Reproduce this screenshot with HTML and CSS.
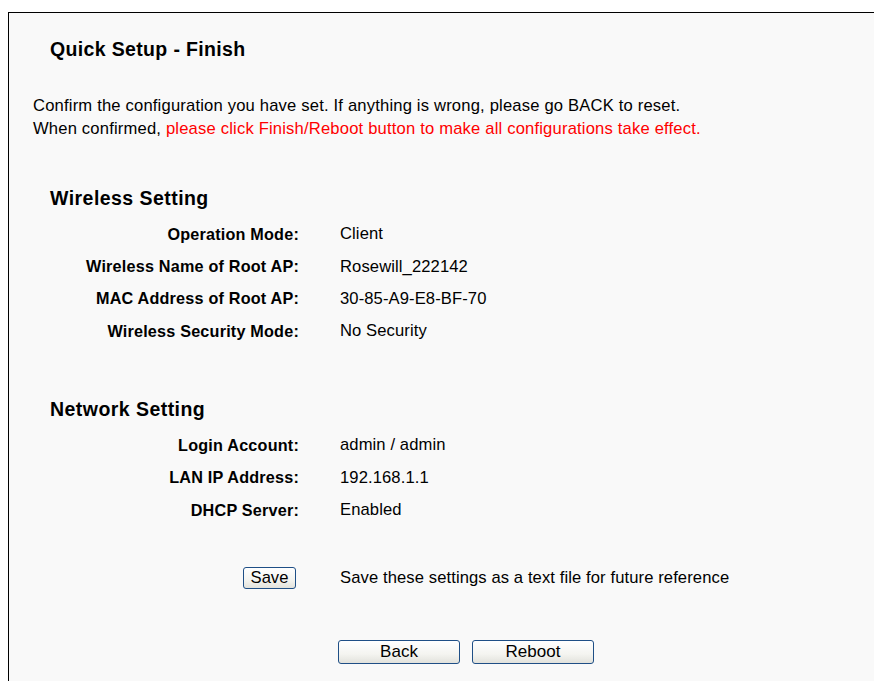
FILE: index.html
```html
<!DOCTYPE html>
<html>
<head>
<meta charset="utf-8">
<title>Quick Setup - Finish</title>
<link rel="stylesheet" href="styles.css">
</head>
<body>
<div class="panel">
  <h1 class="title">Quick Setup - Finish</h1>
  <p class="intro">Confirm the configuration you have set. If anything is wrong, please go BACK to reset.<br>When confirmed, <span class="warn">please click Finish/Reboot button to make all configurations take effect.</span></p>

  <h2 class="section">Wireless Setting</h2>
  <div class="grid">
    <div class="label">Operation Mode:</div><div class="value">Client</div>
    <div class="label">Wireless Name of Root AP:</div><div class="value">Rosewill_222142</div>
    <div class="label">MAC Address of Root AP:</div><div class="value">30-85-A9-E8-BF-70</div>
    <div class="label">Wireless Security Mode:</div><div class="value">No Security</div>
  </div>

  <h2 class="section section-net">Network Setting</h2>
  <div class="grid">
    <div class="label">Login Account:</div><div class="value">admin / admin</div>
    <div class="label">LAN IP Address:</div><div class="value">192.168.1.1</div>
    <div class="label">DHCP Server:</div><div class="value">Enabled</div>
  </div>

  <div class="grid save-row">
    <div class="label"><button class="btn btn-save" type="button">Save</button></div>
    <div class="value">Save these settings as a text file for future reference</div>
  </div>

  <div class="actions">
    <button class="btn btn-wide" type="button">Back</button>
    <button class="btn btn-wide" type="button">Reboot</button>
  </div>
</div>
</body>
</html>
```

FILE: styles.css
```css
html, body {
  margin: 0;
  padding: 0;
  background: #ffffff;
}

body {
  padding: 12px 0 0 8px;
  font-family: "Liberation Sans", Arial, sans-serif;
  color: #000;
  overflow: hidden;
}

.panel {
  border-top: 1px solid #000;
  border-left: 1px solid #000;
  background: #f9f9f9;
  min-height: 700px;
  box-sizing: border-box;
}

.title {
  margin: 0;
  padding: 24px 0 0 41px;
  font-size: 19.5px;
  letter-spacing: 0.35px;
  font-weight: bold;
  line-height: 24px;
}

.intro {
  margin: 33px 0 0 24px;
  font-size: 16.6px;
  letter-spacing: 0.18px;
  line-height: 23px;
}

.warn {
  color: #ff0000;
}

.section {
  margin: 45.5px 0 0 41px;
  font-size: 19.5px;
  letter-spacing: 0.45px;
  font-weight: bold;
  line-height: 24px;
}

.section-net {
  margin-top: 49px;
}

.grid {
  display: grid;
  grid-template-columns: 290px 1fr;
  column-gap: 41px;
  grid-auto-rows: 32.4px;
  margin-top: 8.5px;
  align-items: center;
  font-size: 16.6px;
  letter-spacing: 0.1px;
}

.label {
  text-align: right;
  font-weight: bold;
  font-size: 16.2px;
  letter-spacing: 0.2px;
}

.save-row {
  margin-top: 36px;
}

.btn {
  font-family: "Liberation Sans", Arial, sans-serif;
  font-size: 17px;
  letter-spacing: 0;
  color: #000;
  border: 1px solid #1f4f86;
  border-radius: 3px;
  background: linear-gradient(#ffffff, #f4f4f0 60%, #e2e2dc);
  padding: 0;
  cursor: pointer;
}

.btn-save {
  width: 53px;
  height: 22px;
  margin-right: 3px;
  vertical-align: middle;
  font-size: 16.6px;
}

.actions {
  display: flex;
  gap: 12px;
  margin: 45px 0 0 329px;
}

.btn-wide {
  width: 122px;
  height: 24px;
}
```
